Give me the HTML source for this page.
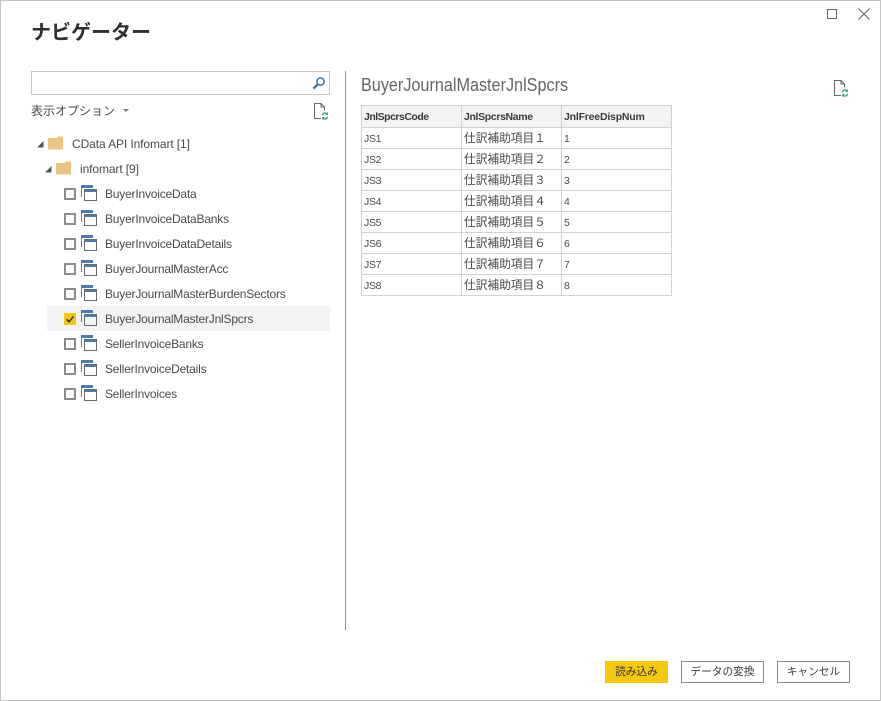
<!DOCTYPE html>
<html lang="ja"><head><meta charset="utf-8"><title>ナビゲーター</title>
<style>
html,body{margin:0;padding:0;background:#fff}
#w{position:relative;width:881px;height:701px;overflow:hidden;background:#fff;box-sizing:border-box;border:1px solid #c4c4c4;font-family:"Liberation Sans","Noto Sans CJK JP",sans-serif;color:#3a3a3a}
#i{position:absolute;left:-1px;top:-1px;width:881px;height:701px}
.t{position:absolute;white-space:nowrap;font-size:12px;line-height:16px;color:#4a4a4a;letter-spacing:-.2px}
.a{position:absolute}
.cb{position:absolute;left:64px;width:8px;height:8px;border:2px solid #8c8c8c}
table{position:absolute;left:361px;top:105px;border-collapse:collapse;table-layout:fixed;width:310px;font-size:10.5px;color:#4a4a4a;letter-spacing:-.3px}
td,th{border:1px solid #d2d2d2;height:21px;padding:0 0 0 2px;text-align:left;box-sizing:border-box;white-space:nowrap;overflow:hidden;line-height:14px}
td{padding-top:1px}
th{height:22px;background:#f3f3f3;font-weight:bold;color:#3c3c3c;letter-spacing:-.5px}
th:nth-child(2){letter-spacing:-.35px}
th:nth-child(3){letter-spacing:-.2px}
td:nth-child(2){font-size:11.7px;letter-spacing:0}
.btn{position:absolute;top:661px;height:22px;box-sizing:border-box;border:1px solid #8a8a8a;text-align:center;font-size:10.7px;line-height:20px;color:#3c3c3c}
</style></head><body>
<div id="w"><div id="i">
<div class="t" style="left:31px;top:20px;font-size:20px;line-height:26px;font-weight:bold;color:#2f2f2f;letter-spacing:0">ナビゲーター</div>

<svg class="a" style="left:827px;top:9px" width="10" height="10"><rect x=".5" y=".5" width="9" height="9" fill="none" stroke="#666"/></svg>
<svg class="a" style="left:858px;top:8px" width="12" height="12"><path d="M.5.5l11 11M11.500.5l-11 11" fill="none" stroke="#666"/></svg>

<div class="a" style="left:31px;top:71px;width:299px;height:24px;box-sizing:border-box;border:1px solid #c8c8c8"></div>
<svg class="a" style="left:312px;top:76px" width="15" height="15" viewBox="0 0 15 15"><circle cx="8.500" cy="5.500" r="3.600" fill="none" stroke="#3f75ad" stroke-width="1.500"/><path d="M5.800 8.200L1.500 12.500" stroke="#3f75ad" stroke-width="2.400"/></svg>

<div class="t" style="left:31px;top:103px;letter-spacing:0">表示オプション</div>
<svg class="a" style="left:123px;top:109px" width="6" height="4"><path d="M0 0h6L3 3z" fill="#777"/></svg>

<svg class="a" style="left:313px;top:102px" width="16" height="18" viewBox="0 0 16 18"><path d="M8 16.500H1.500V1.500H8L11.500 5V8.500M8 1.500V5H11.500" fill="none" stroke="#666"/><path d="M9.300 13.300a3 3 0 0 1 5-1.500M14.700 14.700a3 3 0 0 1-5 1.500" fill="none" stroke="#4fa37f" stroke-width="1.400"/><path d="M15 10v3h-3zM9 18v-3h3z" fill="#4fa37f"/></svg>

<svg class="a" style="left:37px;top:141px" width="7" height="7"><path d="M6.500 0v6.500H0z" fill="#555"/></svg>
<svg class="a" style="left:48px;top:136px" width="15" height="14"><path d="M0 2h9V1.200L10 .5h4.500l.5.500V13.500H0z" fill="#eac583"/></svg>
<div class="t" style="left:72px;top:136px;letter-spacing:-.1px">CData API Infomart [1]</div>

<svg class="a" style="left:45px;top:166px" width="7" height="7"><path d="M6.500 0v6.500H0z" fill="#555"/></svg>
<svg class="a" style="left:56px;top:161px" width="15" height="14"><path d="M0 2h9V1.200L10 .5h4.500l.5.500V13.500H0z" fill="#eac583"/></svg>
<div class="t" style="left:80px;top:161px;letter-spacing:-.1px">infomart [9]</div>

<div class="a" style="left:47px;top:306px;width:283px;height:25px;background:#f3f3f3"></div>

<svg width="0" height="0" style="position:absolute"><defs><g id="tb"><path d="M.5 12V.5" stroke="#777" fill="none"/><rect x="0" y="0" width="12" height="3" fill="#4a7cb3"/><rect x="3" y="4" width="13" height="3" fill="#4a7cb3"/><rect x="3.500" y="4.500" width="12" height="11" fill="none" stroke="#6a6a6a"/></g></defs></svg>

<div class="cb" style="top:188px"></div><svg class="a" style="left:81px;top:185px" width="16" height="16"><use href="#tb"/></svg><div class="t" style="left:105px;top:186px">BuyerInvoiceData</div>
<div class="cb" style="top:213px"></div><svg class="a" style="left:81px;top:210px" width="16" height="16"><use href="#tb"/></svg><div class="t" style="left:105px;top:211px">BuyerInvoiceDataBanks</div>
<div class="cb" style="top:238px"></div><svg class="a" style="left:81px;top:235px" width="16" height="16"><use href="#tb"/></svg><div class="t" style="left:105px;top:236px">BuyerInvoiceDataDetails</div>
<div class="cb" style="top:263px"></div><svg class="a" style="left:81px;top:260px" width="16" height="16"><use href="#tb"/></svg><div class="t" style="left:105px;top:261px">BuyerJournalMasterAcc</div>
<div class="cb" style="top:288px"></div><svg class="a" style="left:81px;top:285px" width="16" height="16"><use href="#tb"/></svg><div class="t" style="left:105px;top:286px">BuyerJournalMasterBurdenSectors</div>
<svg class="a" style="left:64px;top:313px" width="12" height="12"><rect width="12" height="12" fill="#f2c811"/><path d="M2.500 6.300l2.500 2.500 4.500-5.500" fill="none" stroke="#333" stroke-width="1.500"/></svg><svg class="a" style="left:81px;top:310px" width="16" height="16"><use href="#tb"/></svg><div class="t" style="left:105px;top:311px">BuyerJournalMasterJnlSpcrs</div>
<div class="cb" style="top:338px"></div><svg class="a" style="left:81px;top:335px" width="16" height="16"><use href="#tb"/></svg><div class="t" style="left:105px;top:336px">SellerInvoiceBanks</div>
<div class="cb" style="top:363px"></div><svg class="a" style="left:81px;top:360px" width="16" height="16"><use href="#tb"/></svg><div class="t" style="left:105px;top:361px">SellerInvoiceDetails</div>
<div class="cb" style="top:388px"></div><svg class="a" style="left:81px;top:385px" width="16" height="16"><use href="#tb"/></svg><div class="t" style="left:105px;top:386px">SellerInvoices</div>

<div class="a" style="left:345px;top:71px;width:1px;height:559px;background:#8f8f8f"></div>

<div class="t" style="left:361px;top:74px;font-size:18px;line-height:22px;color:#666;letter-spacing:0;transform:scaleX(.9);transform-origin:0 0">BuyerJournalMasterJnlSpcrs</div>
<svg class="a" style="left:833px;top:79px" width="16" height="18" viewBox="0 0 16 18"><path d="M8 16.500H1.500V1.500H8L11.500 5V8.500M8 1.500V5H11.500" fill="none" stroke="#666"/><path d="M9.300 13.300a3 3 0 0 1 5-1.500M14.700 14.700a3 3 0 0 1-5 1.500" fill="none" stroke="#4fa37f" stroke-width="1.400"/><path d="M15 10v3h-3zM9 18v-3h3z" fill="#4fa37f"/></svg>

<table><colgroup><col style="width:100px"><col style="width:100px"><col style="width:110px"></colgroup>
<tr><th>JnlSpcrsCode</th><th>JnlSpcrsName</th><th>JnlFreeDispNum</th></tr>
<tr><td>JS1</td><td>仕訳補助項目１</td><td>1</td></tr>
<tr><td>JS2</td><td>仕訳補助項目２</td><td>2</td></tr>
<tr><td>JS3</td><td>仕訳補助項目３</td><td>3</td></tr>
<tr><td>JS4</td><td>仕訳補助項目４</td><td>4</td></tr>
<tr><td>JS5</td><td>仕訳補助項目５</td><td>5</td></tr>
<tr><td>JS6</td><td>仕訳補助項目６</td><td>6</td></tr>
<tr><td>JS7</td><td>仕訳補助項目７</td><td>7</td></tr>
<tr><td>JS8</td><td>仕訳補助項目８</td><td>8</td></tr>
</table>

<div class="btn" style="left:605px;width:63px;background:#f2c811;border-color:#f2c811;color:#333">読み込み</div>
<div class="btn" style="left:681px;width:83px">データの変換</div>
<div class="btn" style="left:777px;width:73px">キャンセル</div>
</div></div>
</body></html>
